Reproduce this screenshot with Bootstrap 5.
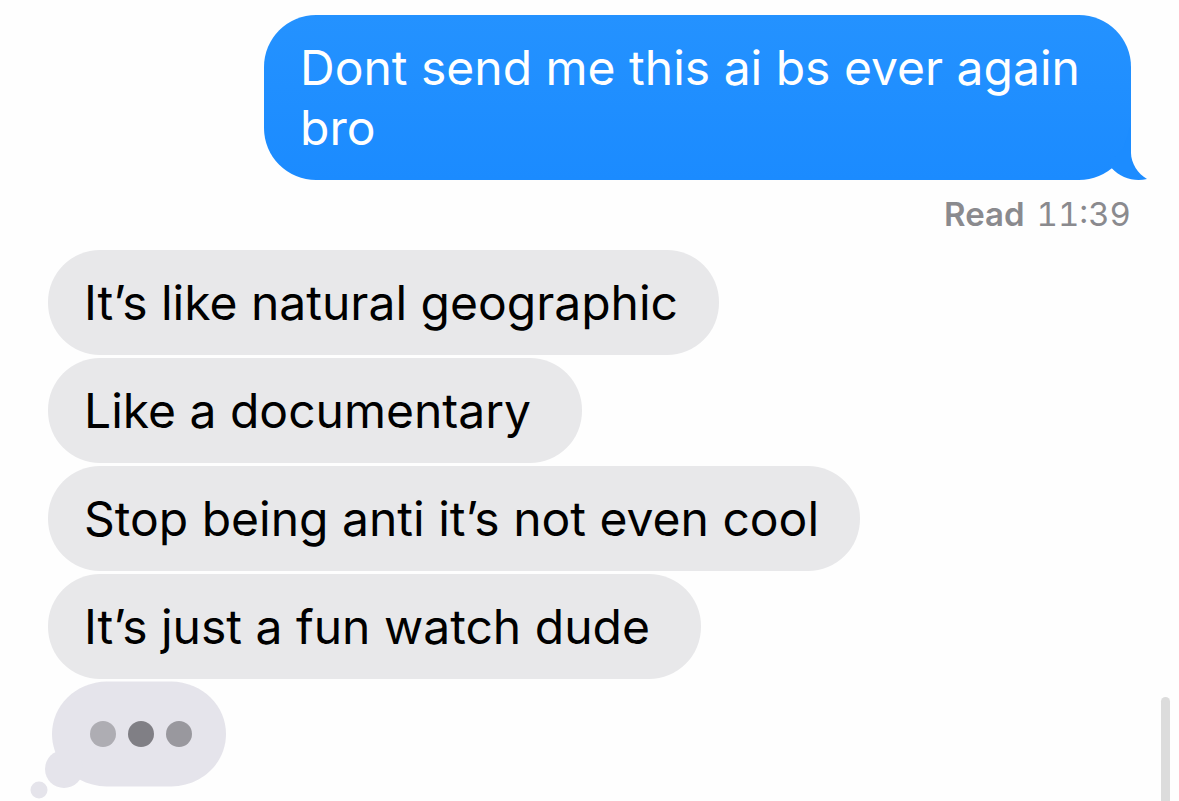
<!DOCTYPE html>
<html lang="en">
<head>
<meta charset="utf-8">
<meta name="viewport" content="width=device-width, initial-scale=1">
<title>Messages</title>
<link href="https://cdn.jsdelivr.net/npm/bootstrap@5.3.0/dist/css/bootstrap.min.css" rel="stylesheet">
<style>
  body { background: #fefefe; color: #000; font-family: Inter, "Liberation Sans", sans-serif; }
  .thread { padding: 15px 48px 0; }
  .bubble { font-size: 48px; line-height: 60px; border-radius: 52px; padding: 23px 41px 22px 36px; max-width: 867px; }
  .bubble-in { background: #e8e8ea; }
  .bubble-roomy { padding-right: 51px; }
  .bubble-out { background: linear-gradient(#2492ff, #1b8bff); color: #fff; }
  .bubble-tail { right: -16px; bottom: 0; }
  .status { color: #8a8a8e; font-size: 33px; line-height: 40px; margin: 14px 0 16px; gap: 12px; font-variant-numeric: tabular-nums; }
  .incoming { gap: 3px; }
  .typing { margin-left: -18px; overflow: visible; }
  .scroll-thumb { right: 9px; bottom: 0; width: 9px; height: 104px; background: #dcdcdc; border-radius: 5px 5px 0 0; }
</style>
</head>
<body>
<main class="thread position-relative min-vh-100 overflow-hidden">
  <div class="d-flex flex-column align-items-end">
    <div class="bubble bubble-out position-relative">
      Dont send me this ai bs ever again bro
      <svg class="bubble-tail position-absolute" width="48" height="61" viewBox="1099 119 48 61" aria-hidden="true">
        <path fill="#1c8cff" d="M1131 124V153C1131 163 1138 174 1147 179C1134 182 1121 178 1111.500 168V160L1124 147Z"/>
      </svg>
    </div>
    <div class="status d-flex"><span class="fw-semibold">Read</span> <span>11:39</span></div>
  </div>
  <div class="incoming d-flex flex-column align-items-start">
    <div class="bubble bubble-in">It’s like natural geographic</div>
    <div class="bubble bubble-in bubble-roomy">Like a documentary</div>
    <div class="bubble bubble-in">Stop being anti it’s not even cool</div>
    <div class="bubble bubble-in bubble-roomy">It’s just a fun watch dude</div>
    <svg class="typing" width="196" height="118" viewBox="30 682 196 118" role="img" aria-label="Typing">
      <g fill="#e5e4eb">
        <path d="M107 681.500H171C203 682 226 706 226 734C226 762 203 786 171 786.500H107C75 786 52 762 52 734C52 706 75 682 107 681.500Z"/>
        <circle cx="64" cy="769" r="19"/>
        <circle cx="39" cy="790" r="8.500"/>
      </g>
      <circle cx="103" cy="734" r="13" fill="#aeadb3"/>
      <circle cx="141" cy="734" r="13" fill="#807f85"/>
      <circle cx="179" cy="734" r="13" fill="#99989e"/>
    </svg>
  </div>
  <div class="scroll-thumb position-absolute"></div>
</main>
<script src="https://cdn.jsdelivr.net/npm/bootstrap@5.3.0/dist/js/bootstrap.bundle.min.js"></script>
</body>
</html>
